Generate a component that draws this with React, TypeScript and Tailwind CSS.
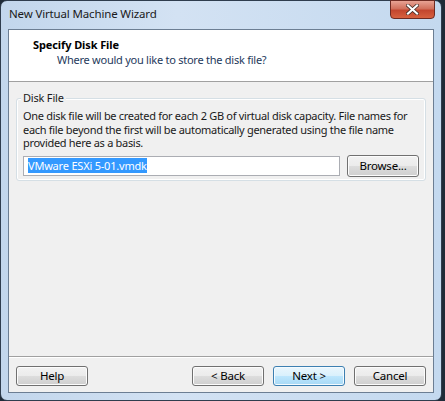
import React from 'react';

const btn =
  'h-[20px] w-[72px] rounded-[3px] border border-[#707070] bg-[linear-gradient(#f2f2f2_0%,#ebebeb_50%,#dddddd_50%,#cfcfcf_100%)] text-[11.5px] tracking-[-0.2px] text-black shadow-[inset_0_0_0_1px_#fcfcfc] flex items-center justify-center';

const App: React.FC = () => {
  return (
    <div className="w-[445px] h-[401px] bg-[#1f2b38] overflow-hidden font-['Noto_Sans','Liberation_Sans',sans-serif]">
      <div className="w-[442px] h-[401px] rounded-[7px] border border-[#2f3d4e] bg-[linear-gradient(90deg,#c2d6ec,#d3e2f3_40%,#c4d9ef)] flex flex-col px-[7px] pb-[7px]">
        {/* title bar */}
        <div className="h-[28px] flex items-start justify-between">
          <span className="mt-[5px] ml-[1px] text-[11.5px] tracking-[-0.15px] text-[#1a1a1a] leading-[16px]">New Virtual Machine Wizard</span>
          <div className="w-[45px] h-[19px] -mt-[1px] mr-[-1px] rounded-b-[4px] border border-[#6e2b22] bg-[linear-gradient(#e8a394,#d1705c_45%,#c3462e_55%,#d7613f)] flex items-center justify-center">
            <svg width="13" height="11" viewBox="0 0 13 11">
              <path d="M2 1.5 L11 9.5 M11 1.5 L2 9.5" stroke="#3a2620" strokeWidth="3.6" strokeLinecap="square" />
              <path d="M2 1.5 L11 9.5 M11 1.5 L2 9.5" stroke="#ffffff" strokeWidth="2.2" strokeLinecap="square" />
            </svg>
          </div>
        </div>

        {/* client */}
        <div className="flex-1 border border-[#6c7e93] bg-[#f0f0f0] flex flex-col">
          <div className="h-[52px] bg-white border-b border-[#a0a0a0] pt-[7px] pl-[24px]">
            <div className="text-[11px] font-bold tracking-[-0.1px] text-black leading-[15px]">Specify Disk File</div>
            <div className="text-[11px] tracking-[-0.25px] text-[#1e395b] leading-[16px] pl-[24px]">Where would you like to store the disk file?</div>
          </div>

          <div className="px-[7px] pt-[16px]">
            <div className="relative rounded-[3px] border border-[#d5dfe5] shadow-[inset_0_0_0_1px_#ffffff] pt-[10px] px-[6px] pb-[3px]">
              <span className="absolute -top-[9px] left-[4px] px-[2px] bg-[#f0f0f0] text-[11px] tracking-[-0.2px] leading-[16px] text-[#1a1a1a]">Disk File</span>
              <p className="text-[11px] tracking-[-0.3px] leading-[13.5px] text-[#1a1a1a]">
                One disk file will be created for each 2 GB of virtual disk capacity. File names for each file beyond the first will be automatically generated using the file name provided here as a basis.
              </p>
              <div className="mt-[5px] flex items-center gap-[7px]">
                <div className="w-[317px] h-[20px] border border-[#abadb3] bg-white flex items-center pl-[4px]">
                  <span className="bg-[#3399ff] text-white text-[11px] tracking-[-0.2px] leading-[15px]">VMware ESXi 5-01.vmdk</span>
                </div>
                <div className={btn + ' w-[71px] h-[22px]'}>Browse...</div>
              </div>
            </div>
          </div>

          <div className="flex-1" />

          <div className="border-t border-[#a0a0a0] shadow-[inset_0_1px_0_#ffffff] h-[36px] flex items-start pt-[9px] pl-[7px] pr-[7px]">
            <div className={btn}>Help</div>
            <div className="flex-1" />
            <div className="flex gap-[9px]">
              <div className={btn}>&lt; Back</div>
              <div className="h-[20px] w-[72px] rounded-[3px] border border-[#3c7fb1] bg-[linear-gradient(#eaf6fd_0%,#d9f0fc_50%,#bee6fd_50%,#a7d9f5_100%)] text-[11.5px] tracking-[-0.2px] text-black shadow-[inset_0_0_0_1px_#f4fbff] flex items-center justify-center">Next &gt;</div>
              <div className={btn}>Cancel</div>
            </div>
          </div>
        </div>
      </div>
    </div>
  );
};

export default App;
